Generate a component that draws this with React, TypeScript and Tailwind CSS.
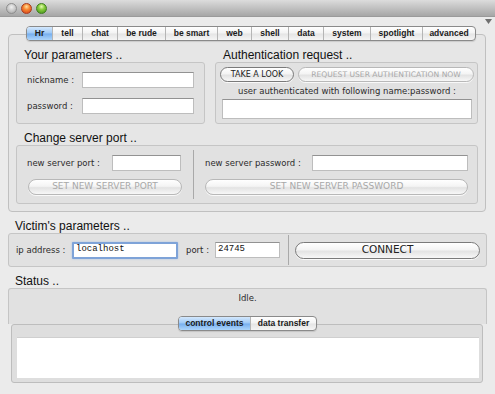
import React from "react";

const LBL = "font-['DejaVu_Sans',sans-serif] text-[8.5px] leading-[11px] text-[#2b2b2b] whitespace-nowrap";
const HEAD = "font-['Liberation_Sans',Arial,sans-serif] text-[12px] leading-[14px] text-[#111111] whitespace-nowrap";
const BOX = "border border-[#c5c5c5] bg-[#e1e1e1] rounded-[3px]";
const INPUT = "bg-white border border-[#bdbdbd] border-t-[#929292]";
const PILL = "flex items-center justify-center rounded-full border bg-[linear-gradient(to_bottom,#ffffff_0%,#f4f4f4_45%,#e3e3e3_55%,#f7f7f7_100%)] font-['DejaVu_Sans',sans-serif] whitespace-nowrap shadow-[0_1px_0_rgba(255,255,255,0.8)]";
const PILL_ON = "border-[#7a7a7a] text-[#222222]";
const PILL_OFF = "border-[#b8b8b8] text-[#a8a8a8]";
const SEG = "flex h-[15px] rounded-[4px] border border-[#8a8a8a] overflow-hidden bg-[linear-gradient(to_bottom,#ffffff_0%,#f3f3f3_48%,#e4e4e4_52%,#f5f5f5_100%)] shadow-[0_1px_1px_rgba(0,0,0,0.12)]";
const SEG_ITEM = "flex items-center justify-center font-['Liberation_Sans',Arial,sans-serif] font-bold text-[8.5px] text-[#1a1a1a] whitespace-nowrap";
const SEG_SEL = "bg-[linear-gradient(to_bottom,#d4e8fd_0%,#9cc8f6_48%,#76aeee_52%,#acd5fb_100%)]";

const TABS: { t: string; w: string }[] = [
  { t: "Hr", w: "w-[25px]" },
  { t: "tell", w: "w-[30px]" },
  { t: "chat", w: "w-[35px]" },
  { t: "be rude", w: "w-[48px]" },
  { t: "be smart", w: "w-[52px]" },
  { t: "web", w: "w-[34px]" },
  { t: "shell", w: "w-[37px]" },
  { t: "data", w: "w-[35px]" },
  { t: "system", w: "w-[47px]" },
  { t: "spotlight", w: "w-[52px]" },
  { t: "advanced", w: "w-[53px]" },
];

function Seg({ items, selected }: { items: { t: string; w: string }[]; selected: number }) {
  return (
    <div className={SEG}>
      {items.map((it, i) => (
        <div
          key={it.t}
          className={`${SEG_ITEM} ${it.w} ${i > 0 ? "border-l border-[#b5b5b5]" : ""} ${i === selected ? SEG_SEL : ""}`}
        >
          {it.t}
        </div>
      ))}
    </div>
  );
}

export default function App() {
  return (
    <div className="relative w-[495px] h-[394px] overflow-hidden bg-[#ebebeb] font-['Liberation_Sans',Arial,sans-serif]">
      {/* title bar */}
      <div className="h-[17px] border-b border-[#9a9a9a] bg-[linear-gradient(to_bottom,#dcdcdc,#a6a6a6)] flex items-center pl-[6px] gap-[4px]">
        <span className="w-[11px] h-[11px] rounded-full border border-[#8e8e8e] bg-[radial-gradient(circle_at_50%_35%,#f0f0f0_0%,#bdbdbd_65%,#9c9c9c_100%)]" />
        <span className="w-[11px] h-[11px] rounded-full border border-[#a63a1e] bg-[radial-gradient(circle_at_50%_30%,#ffe0a0_0%,#f7862f_40%,#d23a18_100%)]" />
        <span className="w-[11px] h-[11px] rounded-full border border-[#3f7d1f] bg-[radial-gradient(circle_at_50%_30%,#e6fbb0_0%,#86cc3c_40%,#3e8c16_100%)]" />
      </div>
      <svg className="absolute top-[19px] left-[485px]" width="7" height="5" viewBox="0 0 7 5">
        <path d="M0 0H7L3.5 5Z" fill="#707070" />
      </svg>

      <div className="px-[8px]">
        {/* main tab bar */}
        <div className="relative z-10 mt-[9px] ml-[18px] w-[450px]">
          <Seg items={TABS} selected={0} />
        </div>

        {/* tab panel */}
        <div className="-mt-[7px] mr-[1px] h-[178px] border border-[#c0c0c0] rounded-[4px] bg-[#e6e6e6] px-[7px] pt-[13px]">
          <div className="flex gap-[10px]">
            {/* Your parameters */}
            <div className="w-[189px]">
              <div className={`${HEAD} pl-[8px]`}>Your parameters ..</div>
              <div className={`${BOX} h-[62px] px-[10px] pt-[9px] flex flex-col gap-[10px]`}>
                <div className="flex items-center h-[16px]">
                  <span className={`${LBL} w-[55px]`}>nickname :</span>
                  <div className={`${INPUT} w-[112px] h-[16px]`} />
                </div>
                <div className="flex items-center h-[16px]">
                  <span className={`${LBL} w-[55px]`}>password :</span>
                  <div className={`${INPUT} w-[112px] h-[16px]`} />
                </div>
              </div>
            </div>
            {/* Authentication request */}
            <div className="w-[263px]">
              <div className={`${HEAD} pl-[8px]`}>Authentication request ..</div>
              <div className={`${BOX} h-[62px] pl-[4px] pr-[3px] pt-[4px]`}>
                <div className="flex gap-[4px] h-[15px]">
                  <div className={`${PILL} ${PILL_ON} w-[74px] h-[15px] text-[8px]`}>TAKE A LOOK</div>
                  <div className={`${PILL} ${PILL_OFF} w-[176px] h-[15px] text-[7.6px]`}>REQUEST USER AUTHENTICATION NOW</div>
                </div>
                <div className={`${LBL} mt-[3px] h-[13px] leading-[13px] text-center`}>
                  user authenticated with following name:password :
                </div>
                <div className={`${INPUT} ml-[2px] mt-[1px] w-[250px] h-[20px]`} />
              </div>
            </div>
          </div>

          {/* Change server port */}
          <div className={`${HEAD} pl-[8px] mt-[7px]`}>Change server port ..</div>
          <div className={`${BOX} h-[59px] flex`}>
            <div className="w-[176px] pl-[10px] pt-[9px]">
              <div className="flex items-center h-[16px]">
                <span className={`${LBL} w-[85px]`}>new server port :</span>
                <div className={`${INPUT} w-[69px] h-[16px]`} />
              </div>
              <div className={`${PILL} ${PILL_OFF} ml-[1px] mt-[8px] w-[154px] h-[16px] text-[9px]`}>SET NEW SERVER PORT</div>
            </div>
            <div className="w-[1px] my-[4px] bg-[#a9a9a9]" />
            <div className="flex-1 pl-[11px] pt-[9px]">
              <div className="flex items-center h-[16px]">
                <span className={`${LBL} w-[107px]`}>new server password :</span>
                <div className={`${INPUT} w-[156px] h-[16px]`} />
              </div>
              <div className={`${PILL} ${PILL_OFF} mt-[8px] w-[263px] h-[16px] text-[9px]`}>SET NEW SERVER PASSWORD</div>
            </div>
          </div>
        </div>

        {/* Victim's parameters */}
        <div className={`${HEAD} pl-[7px] mt-[7px]`}>Victim's parameters ..</div>
        <div className={`${BOX} h-[34px] flex items-center pl-[7px]`}>
          <span className={`${LBL} w-[56px]`}>ip address :</span>
          <div className="w-[106px] h-[17px] bg-white border-2 border-[#7ea3d8] rounded-[1px] shadow-[0_0_2px_#9fbde8] flex items-center pl-[2px] font-['Liberation_Mono',monospace] text-[9px] text-[#111111]">
            localhost
          </div>
          <span className={`${LBL} ml-[8px] w-[29px]`}>port :</span>
          <div className={`${INPUT} w-[65px] h-[16px] flex items-center pl-[2px] font-['Liberation_Mono',monospace] text-[9px] text-[#111111]`}>
            24745
          </div>
          <div className="ml-[8px] w-[1px] self-stretch my-[1px] bg-[#a9a9a9]" />
          <div className={`${PILL} ${PILL_ON} ml-[6px] w-[185px] h-[17px] text-[10.5px]`}>CONNECT</div>
        </div>

        {/* Status */}
        <div className={`${HEAD} pl-[7px] mt-[7px]`}>Status ..</div>
        <div className="h-[36px] border-t border-x border-[#c5c5c5] rounded-t-[3px] bg-[#e1e1e1] pt-[4px]">
          <div className={`${LBL} text-center`}>Idle.</div>
        </div>
        <div className="relative z-10 -mt-[8px] ml-[170px] w-[139px]">
          <Seg
            items={[
              { t: "control events", w: "w-[71px]" },
              { t: "data transfer", w: "w-[66px]" },
            ]}
            selected={0}
          />
        </div>
        <div className="-mt-[7px] ml-[3px] mr-[4px] h-[59px] border border-[#bdbdbd] rounded-[3px] bg-[#dedede] pt-[12px] pl-[5px] pr-[3px]">
          <div className="h-[41px] bg-white border-t border-[#cfcfcf]" />
        </div>
      </div>
    </div>
  );
}
